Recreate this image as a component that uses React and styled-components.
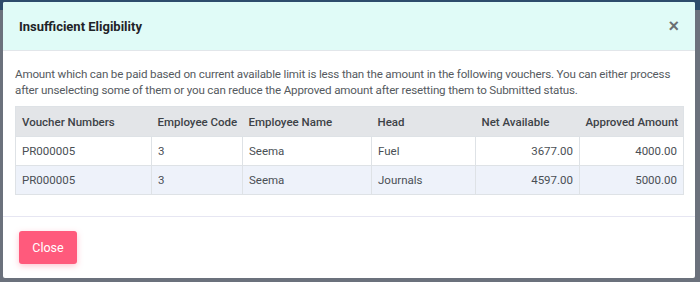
import React from "react";
import styled, { createGlobalStyle } from "styled-components";

const Global = createGlobalStyle`
  html, body { margin: 0; padding: 0; }
  body {
    width: 700px; height: 282px; overflow: hidden;
    background: linear-gradient(#2d4c6c 0, #2d4c6c 10px, #6b717c 10px);
    font-family: Roboto, "Liberation Sans", sans-serif;
  }
`;

const Backdrop = styled.div`
  box-sizing: border-box;
  width: 700px; height: 282px;
  padding: 2px 5px 4px 3px;
  display: flex;
`;

const Modal = styled.div`
  flex: 1;
  background: #fff;
  display: flex;
  flex-direction: column;
  border-radius: 2px;
  overflow: hidden;
`;

const Header = styled.div`
  flex-shrink: 0;
  height: 49px;
  box-sizing: border-box;
  background: #e0fbf7;
  border-bottom: 1px solid #e2e6ea;
  display: flex;
  align-items: center;
  justify-content: space-between;
  padding: 0 16px 0 16px;
`;

const Title = styled.h5`
  margin: 0;
  font-size: 13px;
  font-weight: 700;
  color: #1f2328;
`;

const CloseX = styled.button`
  border: 0; background: none; padding: 0;
  font-size: 18px; font-weight: 700; line-height: 1;
  color: #6b6f73; cursor: pointer;
  font-family: "Liberation Sans", sans-serif;
`;

const Body = styled.div`
  flex-shrink: 0;
  padding: 15px 11px 21px 12px;
  border-bottom: 1px solid #e6e6f2;
`;

const Text = styled.p`
  margin: 0 0 8px 0;
  font-size: 11.6px;
  letter-spacing: -0.17px;
  line-height: 16px;
  color: #555a60;
`;

const Table = styled.table`
  width: 100%;
  border-collapse: collapse;
  table-layout: fixed;
  font-size: 11.5px;
  color: #4a4f55;
  border: 1px solid #dee2e6;
`;

const Th = styled.th`
  background: #e3e5e8;
  font-weight: 500;
  color: #3d4247;
  text-align: left;
  height: 29px;
  padding: 0 6px;
  white-space: nowrap;
`;

const Tr = styled.tr`
  background: ${p => (p.$alt ? "#eef2fa" : "#fff")};
`;

const Td = styled.td`
  height: 28px;
  padding: 0 6px;
  border-left: 1px solid #dee2e6;
  border-top: 1px solid #dee2e6;
  text-align: ${p => (p.$right ? "right" : "left")};
  &:first-child { border-left: 0; }
`;

const Footer = styled.div`
  padding: 14px 16px;
  display: flex;
`;

const Button = styled.button`
  width: 58px;
  height: 33px;
  border: 0;
  border-radius: 3px;
  background: #ff5a7c;
  color: #fff;
  font-family: Roboto, "Liberation Sans", sans-serif;
  font-size: 12.5px;
  box-shadow: 0 2px 6px rgba(255, 90, 124, 0.35);
`;

const rows = [
  ["PR000005", "3", "Seema", "Fuel", "3677.00", "4000.00"],
  ["PR000005", "3", "Seema", "Journals", "4597.00", "5000.00"],
];

const widths = [136, 91, 129, 104, 104, 104];

export default function App() {
  return (
    <>
      <Global />
      <Backdrop>
        <Modal>
          <Header>
            <Title>Insufficient Eligibility</Title>
            <CloseX aria-label="Close">×</CloseX>
          </Header>
          <Body>
            <Text>
              Amount which can be paid based on current available limit is less than the amount in the following vouchers. You can either process after unselecting some of them or you can reduce the Approved amount after resetting them to Submitted status.
            </Text>
            <Table>
              <colgroup>
                {widths.map((w, i) => (
                  <col key={i} style={{ width: w }} />
                ))}
              </colgroup>
              <thead>
                <tr>
                  <Th>Voucher Numbers</Th>
                  <Th>Employee Code</Th>
                  <Th>Employee Name</Th>
                  <Th>Head</Th>
                  <Th>Net Available</Th>
                  <Th>Approved Amount</Th>
                </tr>
              </thead>
              <tbody>
                {rows.map((r, i) => (
                  <Tr key={i} $alt={i % 2 === 1}>
                    {r.map((c, j) => (
                      <Td key={j} $right={j >= 4}>{c}</Td>
                    ))}
                  </Tr>
                ))}
              </tbody>
            </Table>
          </Body>
          <Footer>
            <Button>Close</Button>
          </Footer>
        </Modal>
      </Backdrop>
    </>
  );
}
